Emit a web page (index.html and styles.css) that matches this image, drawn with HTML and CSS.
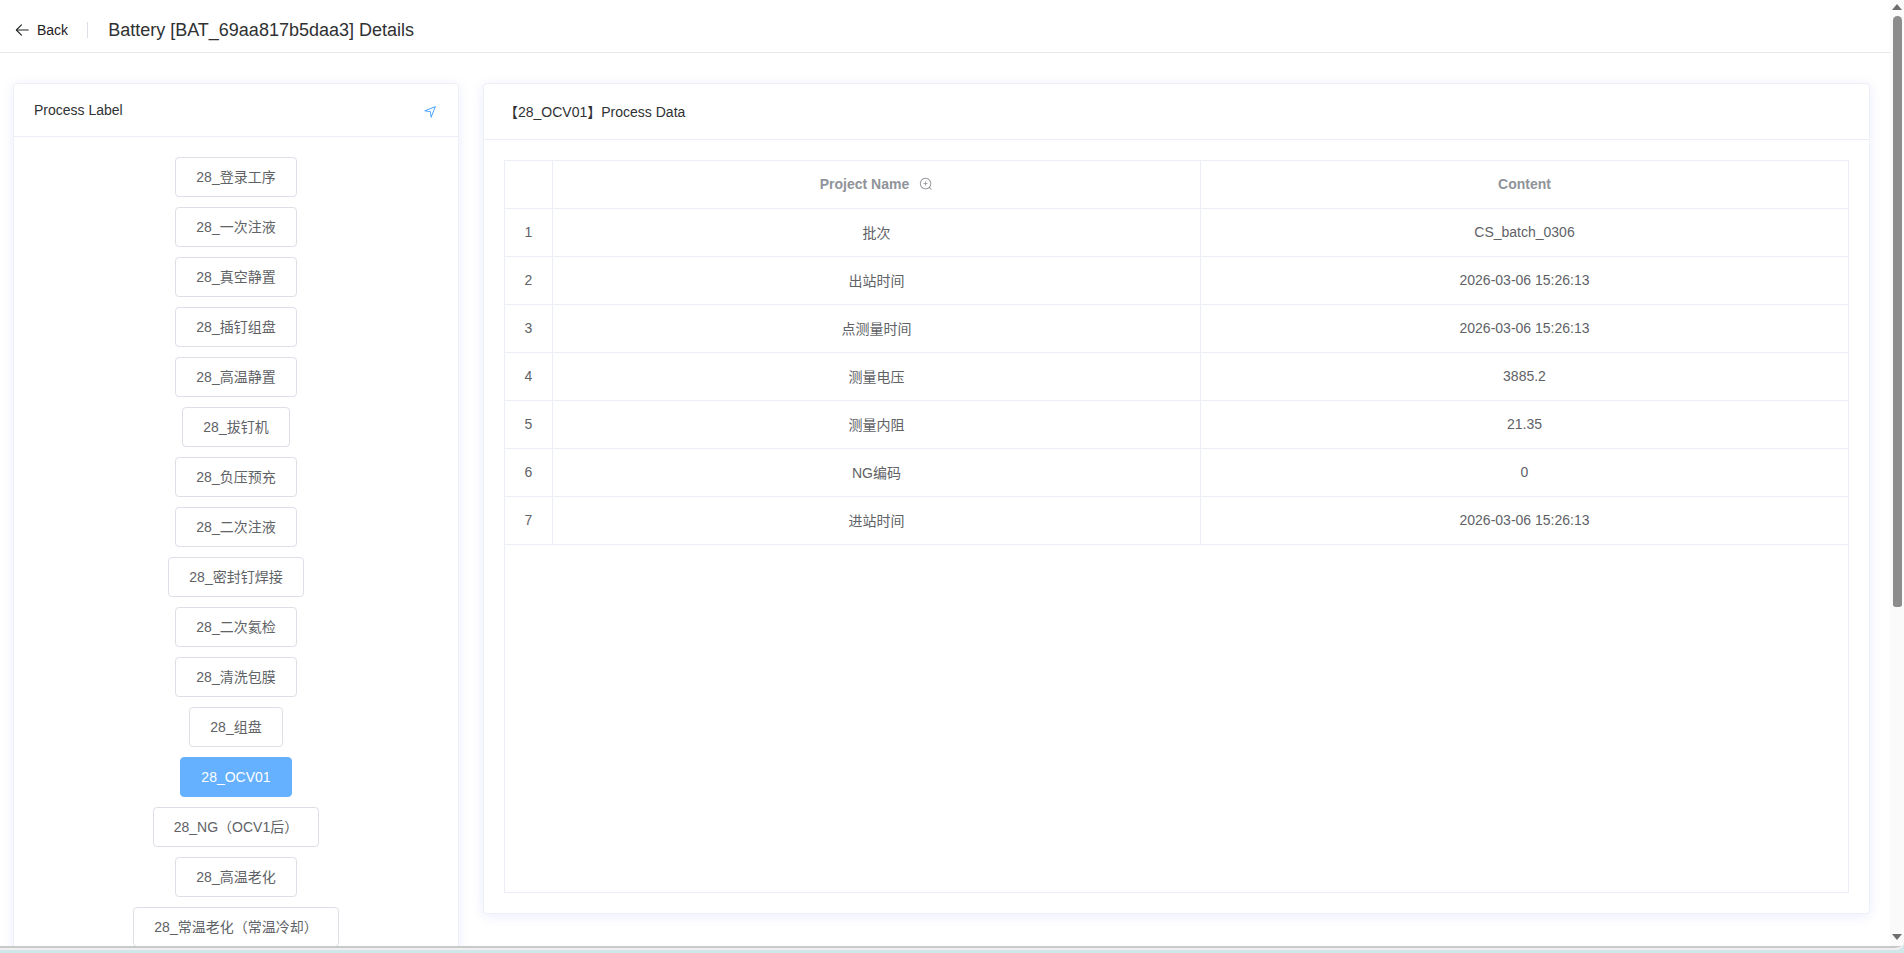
FILE: index.html
```html
<!DOCTYPE html>
<html lang="en">
<head>
    <meta charset="UTF-8">
    <title>Battery Details</title>
    <link rel="stylesheet" href="styles.css">
</head>
<body>
    <div class="window">
        <div class="page">
            <div class="header">
                <div class="back">
                    <svg class="back-icon" viewBox="0 0 1024 1024"><path d="M224 480h640a32 32 0 1 1 0 64H224a32 32 0 0 1 0-64z"/><path d="m237.248 512 265.408 265.344a32 32 0 0 1-45.312 45.312l-288-288a32 32 0 0 1 0-45.312l288-288a32 32 0 1 1 45.312 45.312L237.248 512z"/></svg>
                    <span>Back</span>
                </div>
                <div class="header-divider"></div>
                <div class="title">Battery [BAT_69aa817b5daa3] Details</div>
            </div>

            <div class="main">
                <!-- Process list -->
                <div class="card process-card">
                    <div class="process-head">
                        <span>Process Label</span>
                        <svg class="locate-icon" viewBox="0 0 1024 1024"><path d="M249.6 417.088l319.744 43.072 39.168 310.272L845.12 178.88 249.6 417.088zm-129.024 47.168a32 32 0 0 1-7.68-61.44l777.792-311.04a32 32 0 0 1 41.6 41.6l-310.4 775.68a32 32 0 0 1-61.44-7.808L512 516.992l-391.424-52.736z"/></svg>
                    </div>
                    <div class="process-list">
                        <div class="tag">28_登录工序</div>
                        <div class="tag">28_一次注液</div>
                        <div class="tag">28_真空静置</div>
                        <div class="tag">28_插钉组盘</div>
                        <div class="tag">28_高温静置</div>
                        <div class="tag">28_拔钉机</div>
                        <div class="tag">28_负压预充</div>
                        <div class="tag">28_二次注液</div>
                        <div class="tag">28_密封钉焊接</div>
                        <div class="tag">28_二次氦检</div>
                        <div class="tag">28_清洗包膜</div>
                        <div class="tag">28_组盘</div>
                        <div class="tag active">28_OCV01</div>
                        <div class="tag">28_NG（OCV1后）</div>
                        <div class="tag">28_高温老化</div>
                        <div class="tag">28_常温老化（常温冷却）</div>
                    </div>
                </div>

                <!-- Process data -->
                <div class="card data-card">
                    <div class="data-head">【28_OCV01】Process Data</div>
                    <div class="data-body">
                        <div class="table-wrap">
                            <table class="data-table">
                                <colgroup>
                                    <col class="col-index">
                                    <col class="col-half">
                                    <col>
                                </colgroup>
                                <thead>
                                    <tr>
                                        <th></th>
                                        <th>Project Name<svg class="zoom-icon" viewBox="0 0 1024 1024"><path d="m795.904 750.72 124.992 124.928a32 32 0 0 1-45.248 45.248L750.656 795.904a416 416 0 1 1 45.248-45.248zM480 832a352 352 0 1 0 0-704 352 352 0 0 0 0 704zm-32-384v-96a32 32 0 0 1 64 0v96h96a32 32 0 0 1 0 64h-96v96a32 32 0 0 1-64 0v-96h-96a32 32 0 0 1 0-64h96z"/></svg></th>
                                        <th>Content</th>
                                    </tr>
                                </thead>
                                <tbody>
                                    <tr><td>1</td><td>批次</td><td>CS_batch_0306</td></tr>
                                    <tr><td>2</td><td>出站时间</td><td>2026-03-06 15:26:13</td></tr>
                                    <tr><td>3</td><td>点测量时间</td><td>2026-03-06 15:26:13</td></tr>
                                    <tr><td>4</td><td>测量电压</td><td>3885.2</td></tr>
                                    <tr><td>5</td><td>测量内阻</td><td>21.35</td></tr>
                                    <tr><td>6</td><td>NG编码</td><td>0</td></tr>
                                    <tr><td>7</td><td>进站时间</td><td>2026-03-06 15:26:13</td></tr>
                                </tbody>
                            </table>
                        </div>
                    </div>
                </div>
            </div>
        </div>

        <!-- Browser scrollbar -->
        <div class="scrollbar">
            <div class="arrow-up"></div>
            <div class="thumb"></div>
            <div class="track-rest"></div>
            <div class="arrow-down"></div>
        </div>
    </div>
</body>
</html>
```

FILE: styles.css
```css
html, body {
    height: 100%;
}

body {
    margin: 0;
    overflow: hidden;
    background-color: #cfe6ea;
    font-family: "Liberation Sans", "Noto Sans CJK SC", sans-serif;
    font-size: 14px;
    color: #303133;
}

.window {
    display: flex;
    height: 950px;
    box-sizing: border-box;
    overflow: hidden;
    background-color: #fff;
    border-bottom: 2px solid #efefef;
    box-shadow: inset 0 -2px 0 #c9c9c9;
    border-radius: 0 0 8px 0;
}

.page {
    flex: 1;
    height: 946px;
    min-width: 0;
    overflow: hidden;
}

.header {
    display: flex;
    align-items: center;
    box-sizing: border-box;
    height: 53px;
    padding: 8px 0 0 13px;
    border-bottom: 1px solid #e8e8e8;
}

.back {
    display: flex;
    align-items: center;
    color: #1f2022;
}

.back-icon {
    width: 18px;
    height: 18px;
    margin-right: 6px;
    fill: currentColor;
}

.header-divider {
    width: 1px;
    height: 16px;
    margin: 0 20px 0 19px;
    background-color: #dcdfe6;
}

.title {
    font-size: 18px;
}

.main {
    display: flex;
    align-items: flex-start;
    gap: 24px;
    padding: 30px 20px 0 13px;
}

.card {
    box-sizing: border-box;
    background-color: #fff;
    border: 1px solid #eef0f8;
    border-radius: 4px;
    box-shadow: 0 2px 12px rgba(90, 100, 240, 0.12);
}

.process-card {
    flex: none;
    width: 446px;
}

.process-head {
    display: flex;
    align-items: center;
    justify-content: space-between;
    height: 52px;
    padding: 0 20px;
    border-bottom: 1px solid #ebeef5;
}

.locate-icon {
    width: 14px;
    height: 14px;
    margin: 4px 1px 0 0;
    fill: #409eff;
}

.process-list {
    display: flex;
    flex-direction: column;
    align-items: center;
    gap: 10px;
    padding: 20px;
}

.tag {
    box-sizing: border-box;
    height: 40px;
    padding: 0 20px;
    line-height: 38px;
    color: #606266;
    background-color: #fff;
    border: 1px solid #dcdfe6;
    border-radius: 4px;
}

.tag.active {
    color: #fff;
    background-color: #66b1ff;
    border-color: #66b1ff;
}

.data-card {
    flex: 1;
    min-width: 0;
}

.data-head {
    padding: 19px 20px 17px;
    line-height: 19px;
    border-bottom: 1px solid #ebeef5;
}

.data-body {
    padding: 20px;
}

.table-wrap {
    box-sizing: border-box;
    height: 733px;
    border: 1px solid #ebeef5;
}

.data-table {
    width: 100%;
    table-layout: fixed;
    border-collapse: separate;
    border-spacing: 0;
    color: #606266;
}

.col-index {
    width: 48px;
}

.col-half {
    width: 648px;
}

.data-table th,
.data-table td {
    box-sizing: border-box;
    height: 48px;
    padding: 0 0 2px;
    text-align: center;
    border-bottom: 1px solid #ebeef5;
    border-right: 1px solid #ebeef5;
}

.data-table th:last-child,
.data-table td:last-child {
    border-right: none;
}

.data-table th {
    font-weight: bold;
    color: #909399;
}

.zoom-icon {
    width: 14px;
    height: 14px;
    margin-left: 10px;
    vertical-align: -2px;
    fill: #909399;
}

.scrollbar {
    flex: none;
    display: flex;
    flex-direction: column;
    align-items: center;
    width: 14px;
    height: 946px;
    background-color: #fafafa;
}

.arrow-up {
    width: 0;
    height: 0;
    margin-top: 4px;
    border-left: 5px solid transparent;
    border-right: 5px solid transparent;
    border-bottom: 6px solid #6e6e6e;
}

.thumb {
    width: 9px;
    height: 591px;
    margin-top: 6px;
    background-color: #8c8c8c;
    border-radius: 5px 5px 3px 3px;
}

.track-rest {
    flex: 1;
}

.arrow-down {
    width: 0;
    height: 0;
    margin-bottom: 6px;
    border-left: 5px solid transparent;
    border-right: 5px solid transparent;
    border-top: 6px solid #6e6e6e;
}
```
